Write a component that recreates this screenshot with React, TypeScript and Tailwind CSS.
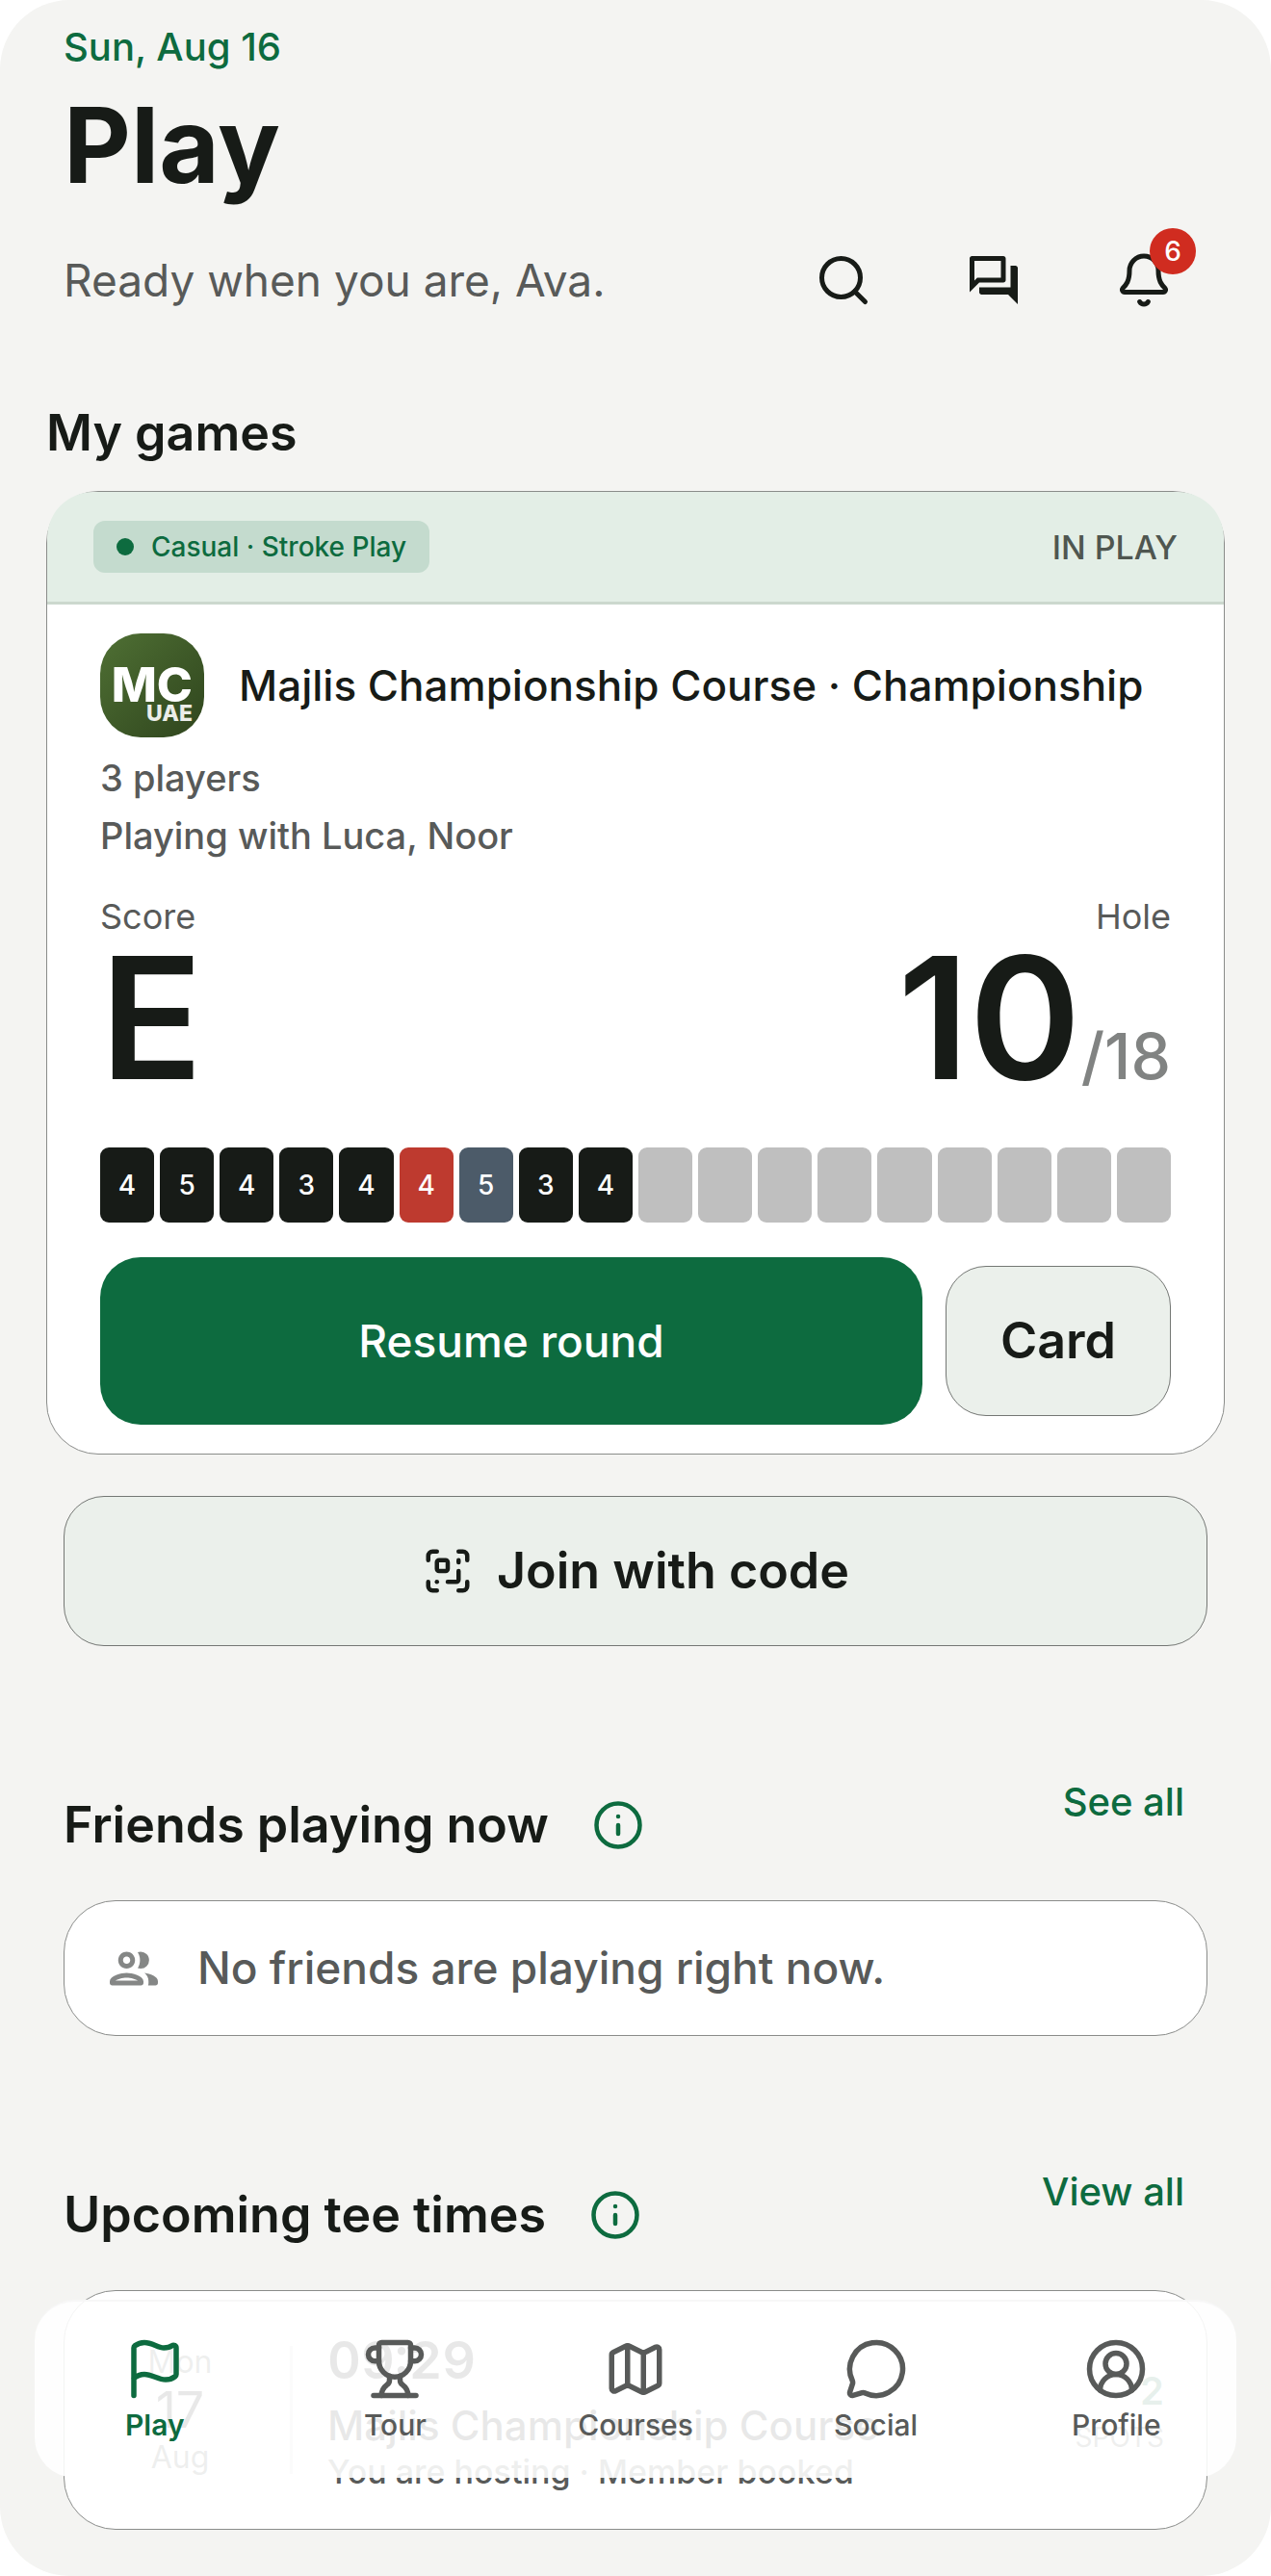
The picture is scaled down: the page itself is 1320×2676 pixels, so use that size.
import type { ComponentType, ReactNode } from 'react';
import {
  Bell,
  CircleUserRound,
  Flag,
  Info,
  Map,
  MessageCircle,
  ScanQrCode,
  Search,
  Trophy,
} from 'lucide-react';
import { MdOutlineForum } from 'react-icons/md';
import clsx from 'clsx';

type HoleResult = 'par' | 'under' | 'over';

interface HoleScore {
  strokes: number;
  result: HoleResult;
}

interface NavItem {
  label: string;
  href: string;
  icon: ComponentType<{ className?: string }>;
}

const HOLE_COUNT = 18;

const scores: HoleScore[] = [
  { strokes: 4, result: 'par' },
  { strokes: 5, result: 'par' },
  { strokes: 4, result: 'par' },
  { strokes: 3, result: 'par' },
  { strokes: 4, result: 'par' },
  { strokes: 4, result: 'under' },
  { strokes: 5, result: 'over' },
  { strokes: 3, result: 'par' },
  { strokes: 4, result: 'par' },
];

const resultColors: Record<HoleResult, string> = {
  par: 'bg-[#171b17]',
  under: 'bg-[#be3a2f]',
  over: 'bg-[#4c5b69]',
};

const navItems: NavItem[] = [
  { label: 'Play', href: '#play', icon: Flag },
  { label: 'Tour', href: '#tour', icon: Trophy },
  { label: 'Courses', href: '#courses', icon: Map },
  { label: 'Social', href: '#social', icon: MessageCircle },
  { label: 'Profile', href: '#profile', icon: CircleUserRound },
];

export default function App() {
  return (
    <div className="relative rounded-[72px] bg-[#f4f4f2] pb-12 font-['Inter',sans-serif] text-[#171b17]">
      <main>
        <Header />
        <GameSection />

        <div className="px-[66px]">
          <button className="mt-[43px] flex h-[156px] w-full items-center justify-center gap-6 rounded-[42px] border border-[#747774] bg-[#ebf0eb] text-[52px] font-semibold">
            <ScanQrCode className="size-[54px]" />
            Join with code
          </button>

          <Section title="Friends playing now" action="See all" href="#friends">
            <div className="flex h-[141px] items-center gap-9 rounded-[54px] border border-[#8a8c8a] bg-white px-[42px]">
              <PeopleIcon className="size-[60px] text-[#858786]" />
              <p className="text-[46px] font-medium text-[#585a59]">No friends are playing right now.</p>
            </div>
          </Section>

          <Section title="Upcoming tee times" action="View all" href="#tee-times">
            <TeeTimeCard />
          </Section>
        </div>
      </main>

      <BottomNav />
    </div>
  );
}

function Header() {
  return (
    <header className="px-[66px] pt-[25px]">
      <p className="text-[40px] leading-[48px] font-medium text-[#0d6b3f]">Sun, Aug 16</p>
      <h1 className="mt-[18px] text-[108px] leading-[120px] font-bold">Play</h1>
      <div className="mt-3.5 flex items-center justify-between">
        <p className="text-[46px] text-[#585a59]">Ready when you are, Ava.</p>
        <div className="flex gap-6">
          <IconButton label="Search">
            <Search className="size-[60px]" />
          </IconButton>
          <IconButton label="Messages">
            <MdOutlineForum className="size-[60px]" />
          </IconButton>
          <IconButton label="Notifications">
            <Bell className="size-[60px]" />
            <span className="absolute top-3 right-3 flex size-12 items-center justify-center rounded-full bg-[#d02c20] text-[28px] font-medium text-white">
              6
            </span>
          </IconButton>
        </div>
      </div>
    </header>
  );
}

function IconButton({ label, children }: { label: string; children: ReactNode }) {
  return (
    <button aria-label={label} className="relative flex size-[132px] items-center justify-center">
      {children}
    </button>
  );
}

function GameSection() {
  return (
    <section className="px-12 pt-[63px]">
      <h2 className="text-[52px] leading-[60px] font-semibold">My games</h2>

      <article className="mt-[30px] rounded-[54px] border border-[#8a8c8a] bg-white">
        {/* Game type and state */}
        <div className="flex h-[117px] items-center justify-between rounded-t-[48px] border-b-[3px] border-[#ccd8ce] bg-[#e3eee6] px-12">
          <div className="flex h-[54px] items-center gap-[18px] rounded-xl bg-[#c4dbce] px-6 text-[28px] font-medium text-[#0d6b3f]">
            <span className="size-[18px] rounded-full bg-[#0d6b3f]" />
            Casual · Stroke Play
          </div>
          <span className="text-[34px] font-medium text-[#4f5650]">IN PLAY</span>
        </div>

        <div className="px-[55px] py-[30px]">
          <div className="flex items-center gap-9">
            <CourseBadge />
            <h3 className="text-[44px] font-medium">Majlis Championship Course · Championship</h3>
          </div>
          <div className="mt-3 text-[38px] leading-[60px] font-medium text-[#585a59]">
            <p>3 players</p>
            <p>Playing with Luca, Noor</p>
          </div>

          {/* Running totals */}
          <div className="mt-[30px] flex justify-between">
            <div>
              <p className="text-[36px] leading-[48px] text-[#585a59]">Score</p>
              <p className="text-[176px] leading-[162px] font-semibold">E</p>
            </div>
            <div className="text-right">
              <p className="text-[36px] leading-[48px] text-[#585a59]">Hole</p>
              <p className="text-[176px] leading-[162px] font-semibold">
                10<span className="text-[66px] leading-none font-medium text-[#818382]">/18</span>
              </p>
            </div>
          </div>

          <ol className="mt-[54px] flex gap-1.5">
            {Array.from({ length: HOLE_COUNT }, (_, index) => {
              const score = scores[index];
              return (
                <li
                  key={index}
                  className={clsx(
                    'flex h-[78px] flex-1 items-center justify-center rounded-[9px] text-[28px] font-medium text-white',
                    score ? resultColors[score.result] : 'bg-[#bfbfbf]',
                  )}
                >
                  {score?.strokes}
                </li>
              );
            })}
          </ol>

          <div className="mt-9 flex items-center gap-6">
            <button className="h-[174px] flex-1 rounded-[42px] bg-[#0d6b3f] text-[46px] font-medium text-white">
              Resume round
            </button>
            <button className="h-[156px] w-[234px] rounded-[42px] border border-[#747774] bg-[#ebf0eb] text-[52px] font-semibold">
              Card
            </button>
          </div>
        </div>
      </article>
    </section>
  );
}

function CourseBadge() {
  return (
    <div className="flex size-[108px] flex-col items-end rounded-[42px] bg-linear-to-br from-[#4f7034] to-[#2f451d] pt-[33px] pr-3 font-extrabold text-white">
      <span className="text-[50px] leading-[40px]">MC</span>
      <span className="text-[23px] leading-[20px] text-white/90">UAE</span>
    </div>
  );
}

function Section({
  title,
  action,
  href,
  children,
}: {
  title: string;
  action: string;
  href: string;
  children: ReactNode;
}) {
  return (
    <section className="pt-[120px]">
      <div className="flex items-start justify-between">
        <div className="flex items-center gap-1.5">
          <h2 className="text-[52px] font-semibold">{title}</h2>
          <button
            aria-label={`About ${title}`}
            className="flex size-[132px] items-center justify-center text-[#0d6b3f]"
          >
            <Info className="size-[54px]" />
          </button>
        </div>
        <a href={href} className="flex h-[84px] items-center px-6 text-[40px] font-medium text-[#0d6b3f]">
          {action}
        </a>
      </div>
      <div className="mt-3">{children}</div>
    </section>
  );
}

function TeeTimeCard() {
  return (
    <article className="flex h-[249px] items-center rounded-[54px] border border-[#8a8c8a] bg-white px-9">
      <div className="w-[168px] text-center text-[32px] leading-[42px] text-[#585a59]">
        <p>Mon</p>
        <p className="text-[52px] leading-[57px] text-[#171b17]">17</p>
        <p>Aug</p>
      </div>
      <div className="ml-[30px] h-[133px] w-[3px] bg-[#d8dad8]" />
      <div className="ml-9 flex-1 pb-2 font-medium">
        <p className="text-[54px] leading-[76px] font-semibold tabular-nums">09:29</p>
        <p className="text-[42px] leading-[60px]">Majlis Championship Course</p>
        <p className="text-[34px] leading-[36px] text-[#585a59]">You are hosting · Member booked</p>
      </div>
      <div className="pt-2 pr-2 text-right leading-[48px]">
        <p className="text-[40px] font-semibold text-[#0d6b3f]">2</p>
        <p className="text-[28px] text-[#585a59]">SPOTS</p>
      </div>
    </article>
  );
}

function BottomNav() {
  return (
    <nav className="absolute inset-x-9 bottom-[102px] grid grid-cols-5 rounded-[42px] border-t-2 border-[#f7f7f7] bg-white/90 pt-[37px] pb-9">
      {navItems.map(({ label, href, icon: Icon }, index) => (
        <a
          key={label}
          href={href}
          className={clsx(
            'flex flex-col items-center gap-1.5 text-[30px] leading-[38px]',
            index === 0 ? 'font-semibold text-[#0d6b3f]' : 'font-medium text-[#585a59]',
          )}
        >
          <Icon className="size-[66px]" />
          {label}
        </a>
      ))}
    </nav>
  );
}

function PeopleIcon({ className }: { className?: string }) {
  return (
    <svg viewBox="0 0 24 24" fill="currentColor" className={className} aria-hidden="true">
      <path d="M9 12c1.93 0 3.5-1.57 3.5-3.5S10.93 5 9 5 5.5 6.57 5.5 8.5 7.07 12 9 12zm0-5c.83 0 1.5.67 1.5 1.5S9.83 10 9 10s-1.5-.67-1.5-1.5S8.17 7 9 7z" />
      <path d="M9 13.75c-2.34 0-7 1.17-7 3.5V18c0 .55.45 1 1 1h12c.55 0 1-.45 1-1v-.75c0-2.33-4.66-3.5-7-3.5zM4.34 17c.84-.58 2.87-1.25 4.66-1.25s3.82.67 4.66 1.25H4.34z" />
      <path d="M14.85 12a3.5 3.5 0 0 0 0-7c-.45 0-.87.08-1.25.2.6.95.95 2.08.95 3.3s-.35 2.35-.95 3.3c.38.12.8.2 1.25.2z" />
      <path d="M16.4 13.84c1.05.82 1.7 1.96 1.7 3.41V18c0 .35-.07.69-.18 1H21c.55 0 1-.45 1-1v-.75c0-1.96-3.2-3.1-5.6-3.41z" />
    </svg>
  );
}
